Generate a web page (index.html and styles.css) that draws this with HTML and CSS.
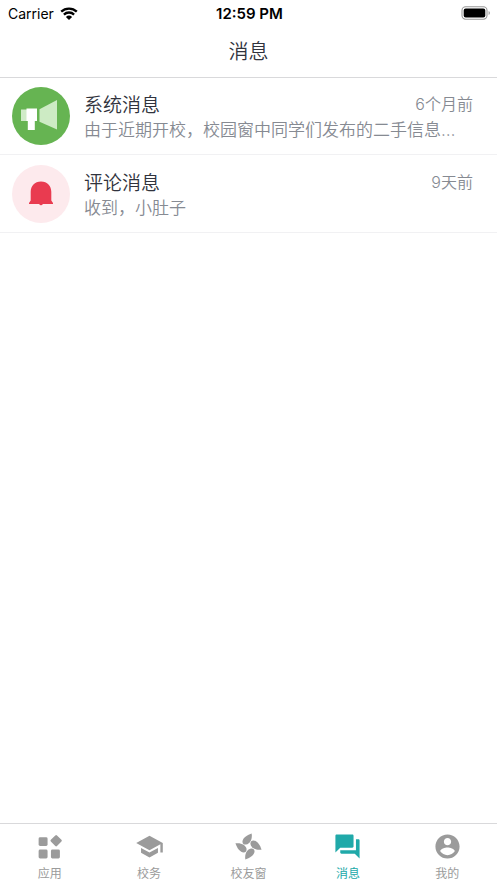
FILE: index.html
```html
<!DOCTYPE html>
<html lang="zh-CN">
<head>
<meta charset="utf-8">
<meta name="viewport" content="width=device-width, initial-scale=1">
<title>消息</title>
<link rel="stylesheet" href="styles.css">
</head>
<body>
<div class="status">
  <div class="status-left">
    <span>Carrier</span>
    <svg class="wifi" viewBox="0 0 18 13" aria-hidden="true">
      <path d="M1.2 4.7A11.2 11.2 0 0 1 16.8 4.7M3.9 7.6A7.3 7.3 0 0 1 14.1 7.6" fill="none" stroke="#000" stroke-width="2.3"/>
      <path d="M9 13L5.9 9.9A4.5 4.5 0 0 1 12.1 9.9Z"/>
    </svg>
  </div>
  <time class="clock">12:59 PM</time>
  <div class="status-right">
    <svg class="battery" viewBox="0 0 30 14" aria-hidden="true">
      <rect x="1" y=".8" width="25" height="12.4" rx="3.6" fill="none" stroke="#999" stroke-width="1.1"/>
      <rect x="2.7" y="2.5" width="21.6" height="9" rx="2"/>
      <path d="M27.6 5v4q1.3-.6 1.3-2t-1.3-2z" fill="#999"/>
    </svg>
  </div>
</div>
<header class="header"><h1>消息</h1></header>
<main class="list">
  <a class="row" href="#system">
    <svg class="avatar" viewBox="0 0 58 58" aria-hidden="true">
      <circle cx="29" cy="29" r="29" fill="#66b452"/>
      <path d="M9 22.500h6v11.500H9z" fill="#d0ebc8"/>
      <path d="M14.500 21.500H25V34h-2.200v9h-7v-9h-1.300z" fill="#fff"/>
      <path d="M27.500 22.300L45 13v29.500l-17.500-7.800z" fill="#cdebc4"/>
    </svg>
    <div class="body">
      <div class="top"><h2>系统消息</h2><time>6个月前</time></div>
      <p>由于近期开校，校园窗中同学们发布的二手信息…</p>
    </div>
  </a>
  <a class="row" href="#comments">
    <svg class="avatar" viewBox="0 0 58 58" aria-hidden="true">
      <circle cx="29" cy="29" r="29" fill="#fdeaed"/>
      <path d="M29 16.500c-6.400 0-10.300 4.300-10.300 10.300v8.700L17 38v1h10.200a1.900 1.900 0 0 0 3.600 0H41v-1l-1.700-2.500v-8.700c0-6-3.900-10.300-10.300-10.300z" fill="#e93b50"/>
    </svg>
    <div class="body">
      <div class="top"><h2>评论消息</h2><time>9天前</time></div>
      <p>收到，小肚子</p>
    </div>
  </a>
</main>
<nav class="tabs">
  <a class="tab" href="#apps">
    <svg viewBox="0 0 24 24" aria-hidden="true"><rect x="3" y="4.300" width="7.400" height="7.200" rx="1.200"/><rect x="3" y="14.500" width="7.400" height="7.400" rx="1.200"/><rect x="13.200" y="14.500" width="7.400" height="7.400" rx="1.200"/><rect x="13.900" y="3.600" width="7.200" height="7.200" rx="1" transform="rotate(45 17.500 7.200)"/></svg>
    <span>应用</span>
  </a>
  <a class="tab" href="#school">
    <svg viewBox="0 0 24 24" aria-hidden="true"><path d="M5 13.180v4L12 21l7-3.820v-4L12 17l-7-3.820zM12 3L1 9l11 6 9-4.910V17h2V9L12 3z"/></svg>
    <span>校务</span>
  </a>
  <a class="tab" href="#alumni">
    <svg viewBox="0 0 24 24" aria-hidden="true">
      <path d="M14.600 1.200C10.400 2.500 7 5.200 7 8c0 1.700 1.300 2.600 2.900 2.400C13.400 9.900 15.400 5.500 14.600 1.200z"/>
      <path d="M14.600 1.200C10.400 2.500 7 5.200 7 8c0 1.700 1.300 2.600 2.900 2.400C13.400 9.900 15.400 5.500 14.600 1.200z" transform="rotate(90 12 12)"/>
      <path d="M14.600 1.200C10.400 2.500 7 5.200 7 8c0 1.700 1.300 2.600 2.900 2.400C13.400 9.900 15.400 5.500 14.600 1.200z" transform="rotate(180 12 12)"/>
      <path d="M14.600 1.200C10.400 2.500 7 5.200 7 8c0 1.700 1.300 2.600 2.900 2.400C13.400 9.900 15.400 5.500 14.600 1.200z" transform="rotate(270 12 12)"/>
    </svg>
    <span>校友窗</span>
  </a>
  <a class="tab active" href="#messages" aria-current="page">
    <svg viewBox="0 0 24 24" aria-hidden="true"><path d="M21 6h-2v9H6v2c0 .55.45 1 1 1h11l4 4V7c0-.55-.45-1-1-1zm-4 6V3c0-.55-.45-1-1-1H3c-.55 0-1 .45-1 1v14l4-4h10c.55 0 1-.45 1-1z"/></svg>
    <span>消息</span>
  </a>
  <a class="tab" href="#me">
    <svg viewBox="0 0 24 24" aria-hidden="true"><path d="M12 2C6.480 2 2 6.480 2 12s4.480 10 10 10 10-4.480 10-10S17.520 2 12 2zm0 3c1.660 0 3 1.340 3 3s-1.340 3-3 3-3-1.340-3-3 1.340-3 3-3zm0 14.200c-2.500 0-4.710-1.280-6-3.220.03-1.990 4-3.080 6-3.080 1.990 0 5.970 1.090 6 3.080-1.290 1.940-3.500 3.220-6 3.220z"/></svg>
    <span>我的</span>
  </a>
</nav>
</body>
</html>
```

FILE: styles.css
```css
* { box-sizing: border-box; }

body {
  margin: 0;
  min-height: 100vh;
  display: flex;
  flex-direction: column;
  background: #fff;
  color: #30333d;
  font-family: Inter, "Noto Sans CJK SC", sans-serif;
}

h1, h2, p { margin: 0; font-weight: 350; }
a { color: inherit; text-decoration: none; }

.status {
  display: grid;
  grid-template-columns: 1fr auto 1fr;
  align-items: center;
  height: 26px;
  padding: 0 6px 0 8px;
  color: #000;
  font-size: 14px;
}
.status-left { display: flex; align-items: center; gap: 6px; }
.status-right { display: flex; justify-content: flex-end; }
.clock { font-size: 15px; font-weight: 600; }
.wifi { width: 18px; height: 13px; }
.battery { width: 30px; height: 14px; }

.header {
  display: flex;
  align-items: center;
  justify-content: center;
  height: 52px;
  border-bottom: 1px solid #d9d9db;
}
.header h1 { font-size: 20px; line-height: 28px; }

.list { flex: 1; margin-top: -1px; }
.row {
  display: flex;
  align-items: center;
  gap: 14px;
  height: 78px;
  padding: 0 24px 0 12px;
  border-bottom: 1px solid #f1f1f3;
}
.avatar { flex: none; width: 58px; height: 58px; }
.body { flex: 1; min-width: 0; padding-top: 2px; }
.top { display: flex; align-items: flex-start; justify-content: space-between; }
.top h2 { font-size: 19px; line-height: 26px; }
.top time { color: #868a92; font-size: 16px; font-weight: 350; line-height: 22px; }
.body p {
  overflow: hidden;
  color: #868a92;
  font-size: 17px;
  line-height: 22px;
  text-overflow: ellipsis;
  white-space: nowrap;
}

.tabs {
  display: flex;
  height: 60px;
  border-top: 1px solid #d9d9db;
}
.tab {
  flex: 1;
  display: flex;
  flex-direction: column;
  align-items: center;
  gap: 5px;
  padding-top: 8px;
  color: #9b9b9b;
  font-size: 12px;
  line-height: 16px;
}
.tab svg { width: 29px; height: 29px; fill: currentColor; }
.tab.active { color: #20a9a9; }
```
